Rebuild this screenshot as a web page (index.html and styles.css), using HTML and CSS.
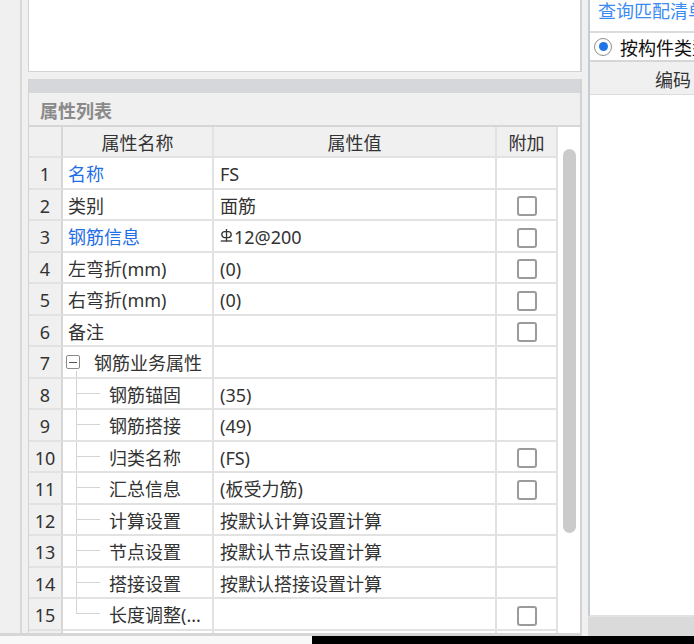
FILE: index.html
```html
<!DOCTYPE html>
<html lang="zh-CN">
<head>
<meta charset="utf-8">
<title>属性列表</title>
<link rel="stylesheet" href="styles.css">
</head>
<body>
<div class="screen">
  <div class="work">
    <div class="left-strip"></div>
    <div class="main">
      <div class="top-box"></div>
      <div class="prop">
        <div class="prop-bar"></div>
        <div class="prop-title">属性列表</div>
        <div class="table-area">
          <div class="grid">
            <div class="c h n"></div><div class="c h">属性名称</div><div class="c h">属性值</div><div class="c h">附加</div>

            <div class="c n">1</div><div class="c k blue">名称</div><div class="c v">FS</div><div class="c a"></div>
            <div class="c n">2</div><div class="c k">类别</div><div class="c v">面筋</div><div class="c a"><span class="box"></span></div>
            <div class="c n">3</div><div class="c k blue">钢筋信息</div><div class="c v"><svg class="steel" width="13" height="16" viewBox="0 0 13 16"><line x1="6.5" y1="1" x2="6.5" y2="13.5" stroke="#333" stroke-width="1.3"/><rect x="1.8" y="3.6" width="9.4" height="6" rx="3" fill="none" stroke="#333" stroke-width="1.3"/><line x1="0.8" y1="13" x2="12.2" y2="13" stroke="#333" stroke-width="1.3"/></svg>12@200</div><div class="c a"><span class="box"></span></div>
            <div class="c n">4</div><div class="c k">左弯折(mm)</div><div class="c v">(0)</div><div class="c a"><span class="box"></span></div>
            <div class="c n">5</div><div class="c k">右弯折(mm)</div><div class="c v">(0)</div><div class="c a"><span class="box"></span></div>
            <div class="c n">6</div><div class="c k">备注</div><div class="c v"></div><div class="c a"><span class="box"></span></div>
            <div class="c n">7</div><div class="c grp"><span class="minus"></span>钢筋业务属性</div><div class="c v"></div><div class="c a"></div>
            <div class="c n">8</div><div class="c t">钢筋锚固</div><div class="c v">(35)</div><div class="c a"></div>
            <div class="c n">9</div><div class="c t">钢筋搭接</div><div class="c v">(49)</div><div class="c a"></div>
            <div class="c n">10</div><div class="c t">归类名称</div><div class="c v">(FS)</div><div class="c a"><span class="box"></span></div>
            <div class="c n">11</div><div class="c t">汇总信息</div><div class="c v">(板受力筋)</div><div class="c a"><span class="box"></span></div>
            <div class="c n">12</div><div class="c t">计算设置</div><div class="c v">按默认计算设置计算</div><div class="c a"></div>
            <div class="c n">13</div><div class="c t">节点设置</div><div class="c v">按默认节点设置计算</div><div class="c a"></div>
            <div class="c n">14</div><div class="c t">搭接设置</div><div class="c v">按默认搭接设置计算</div><div class="c a"></div>
            <div class="c n">15</div><div class="c t last">长度调整(...</div><div class="c v"></div><div class="c a"><span class="box"></span></div>
            <div class="c n"></div><div class="c"></div><div class="c"></div><div class="c"></div>
          </div>
          <div class="scroll"><div class="thumb"></div></div>
        </div>
      </div>
    </div>
  </div>
  <div class="right">
    <div class="rp">
      <div class="link">查询匹配清单</div>
      <div class="radio-row"><span class="radio"></span>按构件类型过滤</div>
      <div class="col-head">编码</div>
    </div>
    <div class="rfoot"></div>
  </div>
</div>
<div class="taskbar"><div class="tb-left"></div><div class="tb-right"></div></div>
</body>
</html>
```

FILE: styles.css
```css
* { box-sizing: border-box; }
html, body { margin: 0; padding: 0; }
body {
  width: 694px;
  height: 644px;
  overflow: hidden;
  background: #f0f0f0;
  font-family: "Noto Sans", "Noto Sans CJK SC", sans-serif;
  font-size: 18px;
  color: #333;
}
.screen { display: flex; height: 636px; }
.work {
  display: flex;
  width: 582px;
  height: 636px;
  border-bottom: 3px solid #d6d6d6;
}
.left-strip { width: 22px; border-right: 2px solid #d9d9d9; }
.main {
  width: 554px;
  margin-left: 6px;
  display: flex;
  flex-direction: column;
}
.top-box {
  height: 72px;
  background: #fff;
  border: 1px solid #d2d2d2;
  border-top: 0;
  border-right-width: 2px;
}
.prop {
  flex: 1;
  min-height: 0;
  margin-top: 7px;
  border-left: 1px solid #d2d2d2;
  border-right: 2px solid #d2d2d2;
  display: flex;
  flex-direction: column;
}
.prop-bar { height: 14px; background: #d5d7db; }
.prop-title {
  height: 34px;
  border-bottom: 2px solid #d6d6d6;
  padding: 2px 0 0 11px;
  display: flex;
  align-items: center;
  font-weight: 700;
  color: #8a8a8a;
  background: #f0f0f0;
}
.table-area { flex: 1; min-height: 0; display: flex; overflow: hidden; }
.grid {
  width: 529px;
  display: grid;
  grid-template-columns: 34px 151px 283px 61px;
  grid-template-rows: 31px;
  grid-auto-rows: 31.5px;
  align-content: start;
  background: #fff;
}
.c {
  border-right: 2px solid #e2e2e2;
  border-bottom: 2px solid #e2e2e2;
  padding-top: 3px;
  display: flex;
  align-items: center;
  white-space: nowrap;
  overflow: hidden;
  line-height: 1;
}
.h { background: #f0f0f0; justify-content: center; }
.n { background: #f0f0f0; justify-content: center; border-right-color: #d6d6d6; }
.k { padding-left: 5px; }
.v { padding-left: 6px; }
.a { justify-content: center; padding-top: 4px; }
.blue { color: #1f6fe6; }
.steel { flex: none; margin: -2px 1px 0 0; }
.box {
  width: 20px;
  height: 20px;
  border: 2px solid #9b9b9b;
  border-radius: 3px;
  background: #fff;
}
.grp {
  padding-left: 3px;
  background: linear-gradient(#d0d0d0, #d0d0d0) 13px 100% / 1px 6px no-repeat;
}
.minus {
  width: 14px;
  height: 14px;
  border: 1px solid #8a8a8a;
  border-radius: 2px;
  display: flex;
  align-items: center;
  justify-content: center;
  margin: -2px 14px 0 0;
  background: #fff;
}
.minus::before { content: ""; width: 8px; height: 1px; background: #555; }
.t {
  padding-left: 46px;
  background:
    linear-gradient(#d4d4d4, #d4d4d4) 13px 0 / 1px 100% no-repeat,
    linear-gradient(#d4d4d4, #d4d4d4) 13px 50% / 24px 1px no-repeat;
}
.t.last {
  background:
    linear-gradient(#d4d4d4, #d4d4d4) 13px 0 / 1px 50% no-repeat,
    linear-gradient(#d4d4d4, #d4d4d4) 13px 50% / 24px 1px no-repeat;
}
.scroll { width: 22px; background: #fff; padding: 22px 0 0 5px; }
.thumb { width: 13px; height: 384px; background: #cbcbcb; border-radius: 7px; }

.right {
  width: 106px;
  margin-left: 6px;
  display: flex;
  flex-direction: column;
}
.rp {
  height: 617px;
  background: #fff;
  border-left: 2px solid #c5ccd4;
  border-bottom: 2px solid #e2e2e2;
  display: flex;
  flex-direction: column;
  overflow: hidden;
}
.link {
  height: 33px;
  flex: none;
  border-bottom: 2px solid #dcdcdc;
  color: #3a8bf2;
  padding-left: 8px;
  line-height: 22px;
  white-space: nowrap;
}
.radio-row {
  height: 29px;
  flex: none;
  border-bottom: 2px solid #d6d6d6;
  display: flex;
  align-items: center;
  padding-left: 4px;
  white-space: nowrap;
  color: #111;
}
.radio {
  width: 18px;
  height: 18px;
  flex: none;
  border-radius: 50%;
  border: 1px solid #8f8f8f;
  display: flex;
  align-items: center;
  justify-content: center;
  margin-right: 8px;
}
.radio::before { content: ""; width: 9px; height: 9px; border-radius: 50%; background: #1f74e8; }
.col-head {
  height: 33px;
  flex: none;
  background: #f0f0f0;
  border-bottom: 1px solid #dcdcdc;
  padding: 2px 0 0 65px;
  display: flex;
  align-items: center;
  white-space: nowrap;
}
.rfoot { flex: 1; background: #dadada; }
.taskbar { display: flex; height: 8px; }
.tb-left { width: 312px; background: #f8f8f8; }
.tb-right { flex: 1; background: #000; }
```
